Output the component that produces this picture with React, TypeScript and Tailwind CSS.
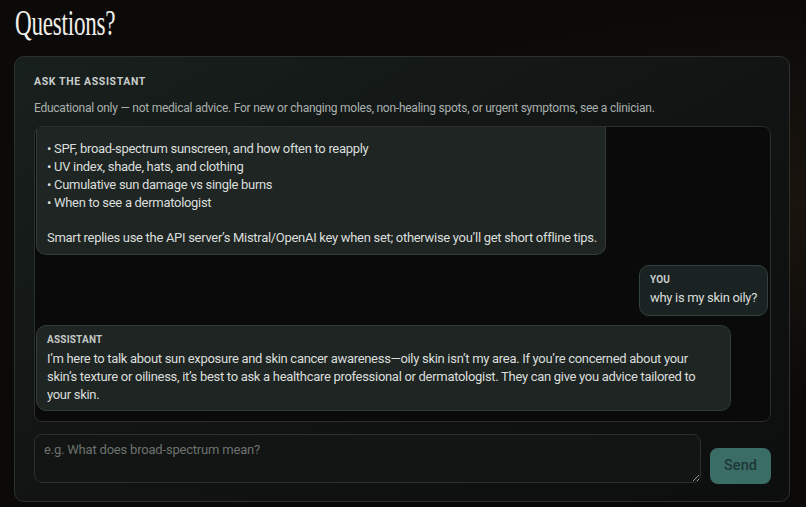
import React from 'react'

const sans = { fontFamily: 'Roboto, "Lato", sans-serif' }

function Label({ children }: { children: React.ReactNode }) {
  return (
    <div className="text-[10px] leading-[14px] font-bold tracking-[0.02em] uppercase text-[#c4c9c6] mb-[3px]">
      {children}
    </div>
  )
}

export default function App() {
  return (
    <div
      className="min-h-screen w-full bg-[#0b0a09] bg-[radial-gradient(ellipse_at_100%_40%,#1a140e_0%,transparent_45%)] pb-[6px] [color-scheme:dark]"
      style={sans}
    >
      <div className="h-[56px] pt-[6px] pl-[15px] overflow-hidden">
        <h1
          className="inline-block text-[35px] leading-[36px] text-[#f1efe9] origin-left scale-x-[0.66] tracking-[-0.01em]"
          style={{ fontFamily: '"Liberation Serif", "DejaVu Serif", serif' }}
        >
          Questions?
        </h1>
      </div>

      <section className="ml-[14px] w-[776px] rounded-[10px] border border-[#2c312f] bg-gradient-to-br from-[#18201d] via-[#111413] to-[#0d0e0e] pl-[19px] pr-[18px] pt-[18px] pb-[18px]">
        <div className="text-[10.5px] leading-[14px] font-bold tracking-[0.06em] text-[#c9cdcb]">
          ASK THE ASSISTANT
        </div>
        <p className="mt-[10px] text-[12px] leading-[18px] tracking-[-0.25px] text-[#abb0ae]">
          Educational only — not medical advice. For new or changing moles, non-healing spots, or urgent symptoms, see a clinician.
        </p>

        {/* chat log, scrolled down: the first reply's top is off view */}
        <div className="mt-[9px] h-[296px] rounded-[8px] border border-[#2a2e2d] bg-[#0a0a0a] overflow-hidden flex flex-col justify-end px-[1px] pb-[10px] text-[13px] leading-[18px] tracking-[-0.3px] text-[#dadedc]">
          <div className="w-[570px] shrink-0 rounded-b-[10px] border border-t-0 border-[#343b38] bg-[#1f2522] px-[10px] pt-[14px] pb-[7px]">
            <div>• SPF, broad-spectrum sunscreen, and how often to reapply</div>
            <div>• UV index, shade, hats, and clothing</div>
            <div>• Cumulative sun damage vs single burns</div>
            <div>• When to see a dermatologist</div>
            <div className="mt-[17px] whitespace-nowrap">
              Smart replies use the API server’s Mistral/OpenAI key when set; otherwise you’ll get short offline tips.
            </div>
          </div>

          <div className="mt-[10px] self-end mr-[1px] shrink-0 rounded-[10px] border border-[#33423e] bg-[#1a2321] px-[10px] pt-[7px] pb-[8px]">
            <div className="text-[10px] leading-[14px] font-bold tracking-[0.02em] text-[#c8cdcb] mb-[2px]">YOU</div>
            <div className="whitespace-nowrap">why is my skin oily?</div>
          </div>

          <div className="mt-[9px] w-[695px] shrink-0 rounded-[10px] border border-[#343b38] bg-[#1f2522] px-[10px] pt-[7px] pb-[6px]">
            <Label>Assistant</Label>
            <div className="whitespace-nowrap">
              I’m here to talk about sun exposure and skin cancer awareness—oily skin isn’t my area. If you’re concerned about your
              <br />
              skin’s texture or oiliness, it’s best to ask a healthcare professional or dermatologist. They can give you advice tailored to
              <br />
              your skin.
            </div>
          </div>
        </div>

        <div className="mt-[12px] flex items-end gap-[9px]">
          <textarea
            placeholder="e.g. What does broad-spectrum mean?"
            className="w-[667px] h-[49px] resize-y rounded-[8px] border border-[#2b302e] bg-[#121513] px-[9px] py-[6px] text-[13px] leading-[18px] tracking-[-0.2px] text-[#dadedc] placeholder:text-[#6c726f] outline-none"
            style={sans}
          />
          <button className="mb-[-1px] h-[36px] w-[61px] rounded-[8px] bg-[#3b6d67] text-[14.5px] font-medium text-[#1d3734]">
            Send
          </button>
        </div>
      </section>
    </div>
  )
}
